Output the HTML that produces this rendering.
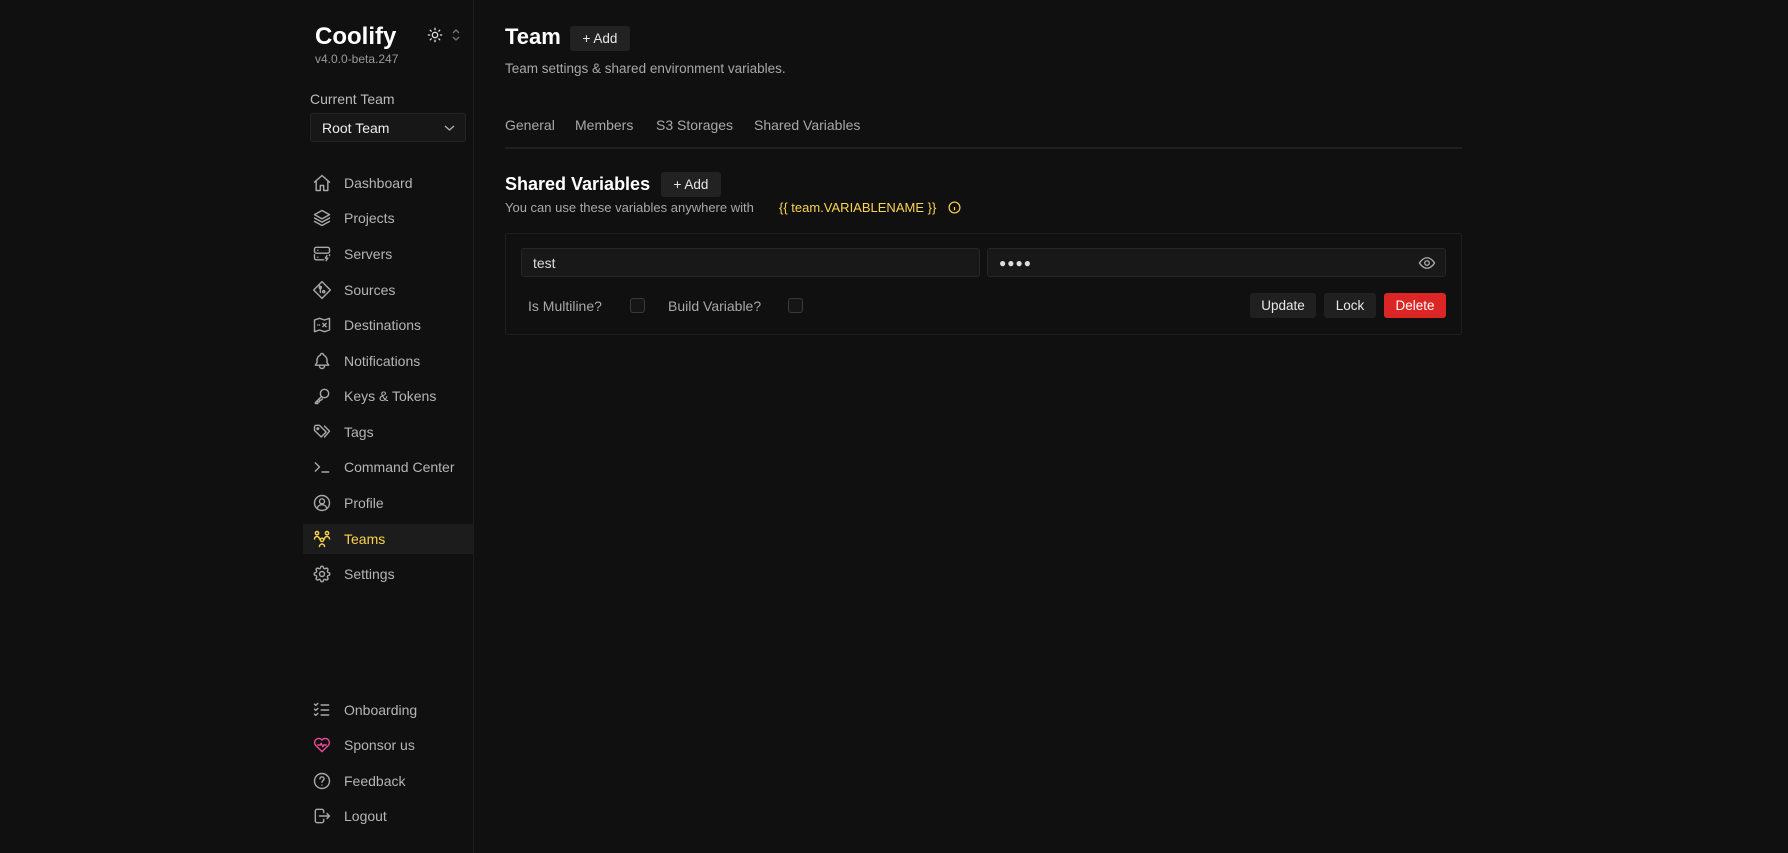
<!DOCTYPE html>
<html><head><meta charset="utf-8"><style>
*{box-sizing:border-box;margin:0;padding:0}
body{width:1788px;height:853px;background:#101010;color:#ddd;font-family:"Liberation Sans",sans-serif;position:relative;overflow:hidden}
.abs{position:absolute}
.side{position:absolute;left:0;top:0;width:474px;height:853px;border-right:1px solid #1f1f1f}
.nav{position:absolute;left:303px;width:171px;height:30px;display:flex;align-items:center;font-size:14px;color:#b5b5b5}
.nav svg{position:absolute;left:9px;width:20px;height:20px;fill:none;stroke:#a8a8a8;stroke-width:1.7;stroke-linecap:round;stroke-linejoin:round}
.nav span{position:absolute;left:41px}
.btn{position:absolute;background:#222;border-radius:3px;color:#e8e8e8;font-size:13.5px;display:flex;align-items:center;justify-content:center}
.inp{position:absolute;background:#181818;border:1px solid #262626;border-radius:3px;font-size:14px;color:#ddd;display:flex;align-items:center;padding-left:11px}
.cb{position:absolute;width:15px;height:15px;border:1px solid #3a3a3a;border-radius:3px;background:#161616}
.lbl{position:absolute;font-size:14px;color:#a8a8a8}
</style></head><body>
<div class="side"></div>
<div class="abs" style="left:315px;top:23px;font-size:24px;font-weight:bold;color:#fff">Coolify</div>
<div class="abs" style="left:315px;top:52px;font-size:12px;color:#999">v4.0.0-beta.247</div>
<svg class="abs" style="left:427px;top:27px" width="16" height="16" viewBox="0 0 24 24" fill="none" stroke="#ddd" stroke-width="2" stroke-linecap="round"><circle cx="12" cy="12" r="4"/><path d="M12 2v2M12 20v2M4.9 4.9l1.4 1.4M17.7 17.7l1.4 1.4M2 12h2M20 12h2M4.9 19.1l1.4-1.4M17.7 6.3l1.4-1.4"/></svg>
<svg class="abs" style="left:451px;top:28px" width="10" height="14" viewBox="0 0 10 14" fill="none" stroke="#777" stroke-width="1.3"><path d="M2 5l3-3 3 3M2 9l3 3 3-3"/></svg>
<div class="abs" style="left:310px;top:91px;font-size:14px;color:#bbb">Current Team</div>
<div class="abs" style="left:310px;top:113px;width:156px;height:29px;background:#171717;border:1px solid #242424;border-radius:3px;font-size:14px;color:#eee;padding:6px 0 0 11px">Root Team
<svg class="abs" style="left:133px;top:10px" width="11" height="8" viewBox="0 0 11 8" fill="none" stroke="#aaa" stroke-width="1.4"><path d="M1 2l4.5 4 4.5-4"/></svg></div>

<div class="nav" style="top:168px"><svg viewBox="0 0 24 24"><path d="M3 11l9-8 9 8M5 9.5V21h5v-6h4v6h5V9.5"/></svg><span>Dashboard</span></div>
<div class="nav" style="top:203px"><svg viewBox="0 0 24 24"><path d="M12 3l9 5-9 5-9-5 9-5zM3 12l9 5 9-5M3 16l9 5 9-5"/></svg><span>Projects</span></div>
<div class="nav" style="top:239px"><svg viewBox="0 0 24 24"><rect x="3" y="4" width="18" height="7" rx="2"/><path d="M3 13v4a2 2 0 002 2h9M21 13v1M7 7.5h.01M7 16h.01M18 14l-2 3h3l-2 3"/></svg><span>Servers</span></div>
<div class="nav" style="top:275px"><svg viewBox="0 0 24 24"><path d="M12 2l10 10-10 10L2 12z"/><circle cx="10" cy="9" r="1.3"/><circle cx="14" cy="14" r="1.3"/><path d="M8 6l3 3M10 10v5"/></svg><span>Sources</span></div>
<div class="nav" style="top:310px"><svg viewBox="0 0 24 24"><path d="M3 6l6-2 6 2 6-2v14l-6 2-6-2-6 2zM13 10l4 4M17 10l-4 4M7 12h.01M9 12h.01"/></svg><span>Destinations</span></div>
<div class="nav" style="top:346px"><svg viewBox="0 0 24 24"><path d="M10 5a2 2 0 014 0 7 7 0 014 6v3l2 3H4l2-3v-3a7 7 0 014-6M9 17v1a3 3 0 006 0v-1"/></svg><span>Notifications</span></div>
<div class="nav" style="top:381px"><svg viewBox="0 0 24 24"><circle cx="15" cy="9" r="5"/><path d="M11.5 12.5L4 20v1h3v-2h2v-2h2l1.5-1.5"/></svg><span>Keys &amp; Tokens</span></div>
<div class="nav" style="top:417px"><svg viewBox="0 0 24 24"><path d="M3 6v4l8 8 6-6-8-8H5a2 2 0 00-2 2zM15 5l6 6-6 7"/><circle cx="7" cy="8" r="1"/></svg><span>Tags</span></div>
<div class="nav" style="top:452px"><svg viewBox="0 0 24 24"><path d="M4 7l5 5-5 5M12 18h8"/></svg><span>Command Center</span></div>
<div class="nav" style="top:488px"><svg viewBox="0 0 24 24"><circle cx="12" cy="12" r="9"/><circle cx="12" cy="10" r="3"/><path d="M6.2 18.5a6 6 0 0111.6 0"/></svg><span>Profile</span></div>
<div class="nav" style="top:524px;background:#1c1c1c;color:#fcd34d"><svg viewBox="0 0 24 24" style="stroke:#fcd34d"><circle cx="12" cy="13" r="2"/><circle cx="6" cy="5" r="2"/><circle cx="18" cy="5" r="2"/><path d="M9 21a3 3 0 016 0M3 12a3 3 0 016 0M15 12a3 3 0 016 0"/></svg><span>Teams</span></div>
<div class="nav" style="top:559px"><svg viewBox="0 0 24 24"><circle cx="12" cy="12" r="3"/><path d="M10.3 4.3a1.7 1.7 0 013.4 0 1.7 1.7 0 002.6 1.1 1.7 1.7 0 012.4 2.4 1.7 1.7 0 001 2.5 1.7 1.7 0 010 3.4 1.7 1.7 0 00-1 2.6 1.7 1.7 0 01-2.4 2.4 1.7 1.7 0 00-2.6 1 1.7 1.7 0 01-3.4 0 1.7 1.7 0 00-2.5-1 1.7 1.7 0 01-2.4-2.4 1.7 1.7 0 00-1.1-2.6 1.7 1.7 0 010-3.4 1.7 1.7 0 001.1-2.5 1.7 1.7 0 012.4-2.4 1.7 1.7 0 002.5-1.1z"/></svg><span>Settings</span></div>

<div class="nav" style="top:695px"><svg viewBox="0 0 24 24"><path d="M3 5l1.5 1.5L7 4M3 11l1.5 1.5L7 10M3 17l1.5 1.5L7 16M11 6h9M11 12h9M11 18h9"/></svg><span>Onboarding</span></div>
<div class="nav" style="top:730px"><svg viewBox="0 0 24 24" style="stroke:#ec4899"><path d="M19.5 12.6L12 20l-7.5-7.4A5 5 0 1112 6a5 5 0 117.5 6.6zM7 12h3l1-2 2 4 1-2h3"/></svg><span>Sponsor us</span></div>
<div class="nav" style="top:766px"><svg viewBox="0 0 24 24"><circle cx="12" cy="12" r="9"/><path d="M9.5 9.5a2.5 2.5 0 115 0c0 2-2.5 2-2.5 4M12 17h.01"/></svg><span>Feedback</span></div>
<div class="nav" style="top:801px"><svg viewBox="0 0 24 24"><path d="M14 8V6a2 2 0 00-2-2H6a2 2 0 00-2 2v12a2 2 0 002 2h6a2 2 0 002-2v-2M9 12h12l-3-3M18 15l3-3"/></svg><span>Logout</span></div>

<div class="abs" style="left:505px;top:24px;font-size:22px;font-weight:bold;color:#fff">Team</div>
<div class="btn" style="left:570px;top:26px;width:60px;height:25px">+ Add</div>
<div class="abs" style="left:505px;top:61px;font-size:13.5px;color:#a8a8a8">Team settings &amp; shared environment variables.</div>
<div class="abs" style="left:505px;top:117px;font-size:14px;color:#a8a8a8">General</div>
<div class="abs" style="left:575px;top:117px;font-size:14px;color:#a8a8a8">Members</div>
<div class="abs" style="left:656px;top:117px;font-size:14px;color:#a8a8a8">S3 Storages</div>
<div class="abs" style="left:754px;top:117px;font-size:14px;color:#a8a8a8">Shared Variables</div>
<div class="abs" style="left:505px;top:147px;width:957px;height:2px;background:#1f1f1f"></div>
<div class="abs" style="left:505px;top:174px;font-size:18px;font-weight:bold;color:#fff">Shared Variables</div>
<div class="btn" style="left:661px;top:172px;width:60px;height:25px">+ Add</div>
<div class="abs" style="left:505px;top:200px;font-size:13px;color:#a8a8a8">You can use these variables anywhere with</div>
<div class="abs" style="left:779px;top:200px;font-size:13px;color:#fcd34d">{{ team.VARIABLENAME }}</div>
<svg class="abs" style="left:948px;top:201px" width="13" height="13" viewBox="0 0 24 24" fill="none" stroke="#fcd34d" stroke-width="2.2"><circle cx="12" cy="12" r="10"/><path d="M12 11v6M12 7h.01"/></svg>
<div class="abs" style="left:505px;top:233px;width:957px;height:102px;border:1px solid #1f1f1f;border-radius:3px"></div>
<div class="inp" style="left:521px;top:248px;width:459px;height:29px">test</div>
<div class="inp" style="left:987px;top:248px;width:459px;height:29px;font-size:12px;letter-spacing:1px">●●●●</div>
<svg class="abs" style="left:1418px;top:254px" width="18" height="18" viewBox="0 0 24 24" fill="none" stroke="#aaa" stroke-width="1.8"><path d="M2 12s4-7 10-7 10 7 10 7-4 7-10 7S2 12 2 12z"/><circle cx="12" cy="12" r="3"/></svg>
<div class="lbl" style="left:528px;top:298px">Is Multiline?</div>
<div class="cb" style="left:630px;top:298px"></div>
<div class="lbl" style="left:668px;top:298px">Build Variable?</div>
<div class="cb" style="left:788px;top:298px"></div>
<div class="btn" style="left:1250px;top:293px;width:66px;height:25px;background:#202020">Update</div>
<div class="btn" style="left:1324px;top:293px;width:52px;height:25px;background:#202020">Lock</div>
<div class="btn" style="left:1384px;top:293px;width:62px;height:25px;background:#dc2626;color:#fff">Delete</div>
</body></html>
